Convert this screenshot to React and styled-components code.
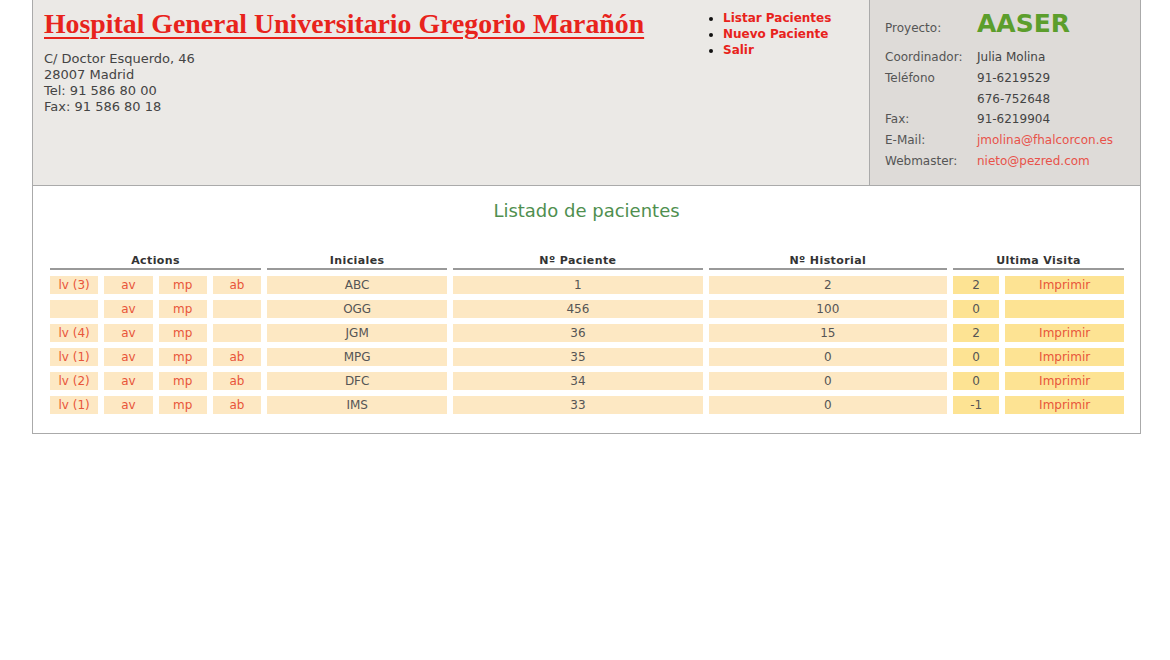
import React from "react";
import styled, { createGlobalStyle } from "styled-components";

const GlobalStyle = createGlobalStyle`
  body {
    margin: 0;
    background: #fff;
    font-family: Tahoma, "DejaVu Sans", sans-serif;
  }
`;

const Page = styled.div`
  width: 1109px;
  margin: 0 0 0 32px;
  border: 1px solid #aaa;
  border-top: none;
  box-sizing: border-box;
`;

const Header = styled.div`
  display: flex;
  height: 185px;
  background-color: #ebe9e6;
  border-bottom: 1px solid #aaa;
`;

const HospitalBlock = styled.div`
  flex: 1;
  padding: 8px 0 0 11px;
  display: flex;
`;

const Address = styled.div`
  width: 667px;
`;

const Title = styled.a`
  display: inline-block;
  font-family: "Liberation Serif", serif;
  font-weight: bold;
  font-size: 27.8px;
  color: #e8231c;
  text-decoration: underline;
  text-decoration-thickness: 2px;
  text-underline-offset: 4px;
  margin-bottom: 11px;
`;

const AddressLine = styled.div`
  font-size: 13px;
  line-height: 16px;
  color: #444;
`;

const Nav = styled.ul`
  margin: 2px 0 0 0;
  padding: 0 0 0 12px;
  list-style: disc;
  color: #111;
  font-size: 12px;
  line-height: 16px;
`;

const NavItem = styled.li`
  color: #e8231c;
  font-weight: bold;
  &::marker {
    color: #111;
  }
`;

const Project = styled.div`
  width: 271px;
  background-color: #dedbd8;
  border-left: 1px solid #aaa;
  padding: 9px 0 0 15px;
  box-sizing: border-box;
`;

const InfoRow = styled.div`
  display: flex;
  align-items: baseline;
  height: ${(p) => (p.$big ? "41px" : "20.8px")};
  font-size: 12px;
  color: #555;
`;

const Label = styled.span`
  width: 92px;
`;

const Value = styled.span`
  color: ${(p) => (p.$link ? "#e8524a" : "#444")};
`;

const ProjectName = styled.span`
  font-size: 25px;
  font-weight: bold;
  color: #5c9e2c;
  font-family: "DejaVu Sans", sans-serif;
`;

const Content = styled.div`
  padding: 14px 11px 13px 11px;
`;

const Heading = styled.h2`
  margin: 0 0 26px 0;
  text-align: center;
  font-size: 18px;
  font-weight: normal;
  color: #4f8f4f;
`;

const Table = styled.table`
  width: 1086px;
  border-spacing: 6px 6.4px;
  table-layout: fixed;
`;

const HeadCell = styled.th`
  font-size: 11px;
  letter-spacing: 0.4px;
  font-weight: bold;
  color: #333;
  padding: 1px 0 1px 0;
  border-bottom: 2px solid #999;
  line-height: 13px;
`;

const Cell = styled.td`
  height: 18px;
  padding: 0;
  text-align: center;
  font-size: 12px;
  line-height: 18px;
  background-color: ${(p) => (p.$strong ? "#fde393" : "#fde8c3")};
  color: ${(p) => (p.$link ? "#e8553a" : "#555")};
`;

const widths = [48, 48, 48, 48, 179, 248, 237, 46, 118];

const rows = [
  { lv: "lv (3)", ab: true, ini: "ABC", pac: "1", hist: "2", visit: "2", print: true },
  { lv: "", ab: false, ini: "OGG", pac: "456", hist: "100", visit: "0", print: false },
  { lv: "lv (4)", ab: false, ini: "JGM", pac: "36", hist: "15", visit: "2", print: true },
  { lv: "lv (1)", ab: true, ini: "MPG", pac: "35", hist: "0", visit: "0", print: true },
  { lv: "lv (2)", ab: true, ini: "DFC", pac: "34", hist: "0", visit: "0", print: true },
  { lv: "lv (1)", ab: true, ini: "IMS", pac: "33", hist: "0", visit: "-1", print: true },
];

function PatientTable() {
  return (
    <Table>
      <colgroup>
        {widths.map((w, i) => (
          <col key={i} style={{ width: w }} />
        ))}
      </colgroup>
      <thead>
        <tr>
          <HeadCell colSpan={4}>Actions</HeadCell>
          <HeadCell>Iniciales</HeadCell>
          <HeadCell>Nº Paciente</HeadCell>
          <HeadCell>Nº Historial</HeadCell>
          <HeadCell colSpan={2}>Ultima Visita</HeadCell>
        </tr>
      </thead>
      <tbody>
        {rows.map((r) => (
          <tr key={r.ini}>
            <Cell $link>{r.lv}</Cell>
            <Cell $link>av</Cell>
            <Cell $link>mp</Cell>
            <Cell $link>{r.ab ? "ab" : ""}</Cell>
            <Cell>{r.ini}</Cell>
            <Cell>{r.pac}</Cell>
            <Cell>{r.hist}</Cell>
            <Cell $strong>{r.visit}</Cell>
            <Cell $strong $link>{r.print ? "Imprimir" : ""}</Cell>
          </tr>
        ))}
      </tbody>
    </Table>
  );
}

function App() {
  return (
    <>
      <GlobalStyle />
      <Page>
        <Header>
          <HospitalBlock>
            <Address>
              <Title>Hospital General Universitario Gregorio Marañón</Title>
              <AddressLine>C/ Doctor Esquerdo, 46</AddressLine>
              <AddressLine>28007 Madrid</AddressLine>
              <AddressLine>Tel: 91 586 80 00</AddressLine>
              <AddressLine>Fax: 91 586 80 18</AddressLine>
            </Address>
            <Nav>
              <NavItem>Listar Pacientes</NavItem>
              <NavItem>Nuevo Paciente</NavItem>
              <NavItem>Salir</NavItem>
            </Nav>
          </HospitalBlock>
          <Project>
            <InfoRow $big>
              <Label>Proyecto:</Label>
              <ProjectName>AASER</ProjectName>
            </InfoRow>
            <InfoRow>
              <Label>Coordinador:</Label>
              <Value>Julia Molina</Value>
            </InfoRow>
            <InfoRow>
              <Label>Teléfono</Label>
              <Value>91-6219529</Value>
            </InfoRow>
            <InfoRow>
              <Label />
              <Value>676-752648</Value>
            </InfoRow>
            <InfoRow>
              <Label>Fax:</Label>
              <Value>91-6219904</Value>
            </InfoRow>
            <InfoRow>
              <Label>E-Mail:</Label>
              <Value $link>jmolina@fhalcorcon.es</Value>
            </InfoRow>
            <InfoRow>
              <Label>Webmaster:</Label>
              <Value $link>nieto@pezred.com</Value>
            </InfoRow>
          </Project>
        </Header>
        <Content>
          <Heading>Listado de pacientes</Heading>
          <PatientTable />
        </Content>
      </Page>
    </>
  );
}

export default App;
